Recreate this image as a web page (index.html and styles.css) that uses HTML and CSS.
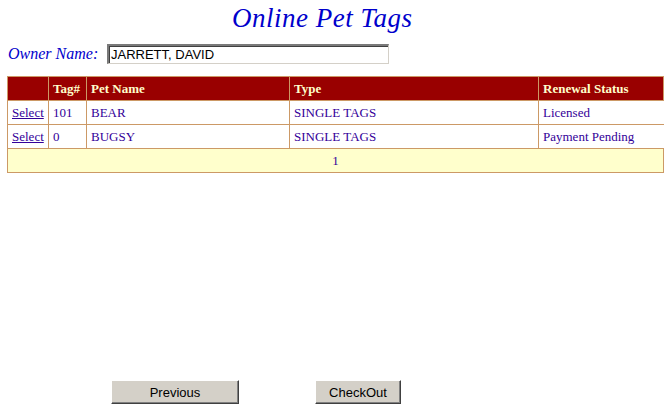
FILE: index.html
```html
<!DOCTYPE html>
<html>
<head>
<meta charset="utf-8">
<title>Online Pet Tags</title>
<link rel="stylesheet" href="styles.css">
</head>
<body>
<div class="page">
  <div class="title-row"><h1 class="title">Online Pet Tags</h1></div>
  <div class="owner-row">
    <span class="owner-label">Owner Name:</span>
    <div class="owner-input">JARRETT, DAVID</div>
  </div>
  <table class="grid">
    <colgroup>
      <col class="c1"><col class="c2"><col class="c3"><col class="c4"><col class="c5">
    </colgroup>
    <thead>
      <tr class="head">
        <th></th><th>Tag#</th><th>Pet Name</th><th>Type</th><th>Renewal Status</th>
      </tr>
    </thead>
    <tbody>
      <tr class="row">
        <td><a href="#" class="sel">Select</a></td><td>101</td><td>BEAR</td><td>SINGLE TAGS</td><td class="last">Licensed</td>
      </tr>
      <tr class="row">
        <td><a href="#" class="sel">Select</a></td><td>0</td><td>BUGSY</td><td>SINGLE TAGS</td><td class="last">Payment Pending</td>
      </tr>
      <tr class="pager">
        <td colspan="5">1</td>
      </tr>
    </tbody>
  </table>
  <div class="buttons">
    <button class="btn btn-prev">Previous</button>
    <button class="btn btn-check">CheckOut</button>
  </div>
</div>
</body>
</html>
```

FILE: styles.css
```css
html, body {
  margin: 0;
  padding: 0;
  background: #ffffff;
}
.page {
  width: 671px;
  height: 410px;
  overflow: hidden;
  font-family: "Liberation Serif", "Times New Roman", serif;
}
.title-row {
  display: flex;
  padding: 3px 0 0 232px;
}
.title {
  margin: 0;
  font-size: 27px;
  line-height: 30px;
  letter-spacing: 0.5px;
  font-style: italic;
  font-weight: normal;
  color: #0000cc;
  white-space: nowrap;
}
.owner-row {
  display: flex;
  align-items: center;
  margin-top: 11px;
  padding-left: 8px;
  gap: 10px;
}
.owner-label {
  font-style: italic;
  font-size: 16px;
  line-height: 20px;
  color: #0000cc;
  width: 89px;
  white-space: nowrap;
}
.owner-input {
  box-sizing: border-box;
  width: 282px;
  height: 20px;
  border-top: 2px solid #7a7a7a;
  border-left: 2px solid #7a7a7a;
  border-right: 1px solid #d4d0c8;
  border-bottom: 1px solid #d4d0c8;
  box-shadow: inset 1px 1px 0 #404040;
  padding: 0 2px;
  font-family: "Liberation Sans", Arial, sans-serif;
  font-size: 13px;
  line-height: 17px;
  color: #000;
  background: #fff;
}
.grid {
  margin: 12px 0 0 7px;
  width: 656px;
  table-layout: fixed;
  border-collapse: collapse;
  font-size: 13px;
  color: #330099;
}
.c1 { width: 41px; }
.c2 { width: 38px; }
.c3 { width: 203px; }
.c4 { width: 249px; }
.c5 { width: 125px; }
.grid th, .grid td {
  border: 1px solid #cc9966;
  padding: 4px 4px 4px 4px;
  height: 15px;
  line-height: 15px;
  text-align: left;
  white-space: nowrap;
  overflow: hidden;
}
.grid td.last {
  border-right: none;
}
.head th {
  background: #990000;
  color: #ffffcc;
  font-weight: bold;
}
.row td {
  background: #ffffff;
}
.sel {
  color: #330099;
  text-decoration: underline;
}
.pager td {
  background: #ffffcc;
  text-align: center;
  border-right: 1px solid #cc9966;
}
.buttons {
  display: flex;
  margin-top: 207px;
  padding-left: 111px;
  gap: 76px;
}
.btn {
  box-sizing: border-box;
  height: 24px;
  margin: 0;
  padding: 0;
  background: #d4d0c8;
  border-top: 1px solid #ffffff;
  border-left: 1px solid #ffffff;
  border-right: 1px solid #404040;
  border-bottom: 1px solid #404040;
  box-shadow: inset -1px -1px 0 #808080;
  font-family: "Liberation Sans", Arial, sans-serif;
  font-size: 13px;
  color: #000;
}
.btn-prev { width: 128px; }
.btn-check { width: 86px; }
```
